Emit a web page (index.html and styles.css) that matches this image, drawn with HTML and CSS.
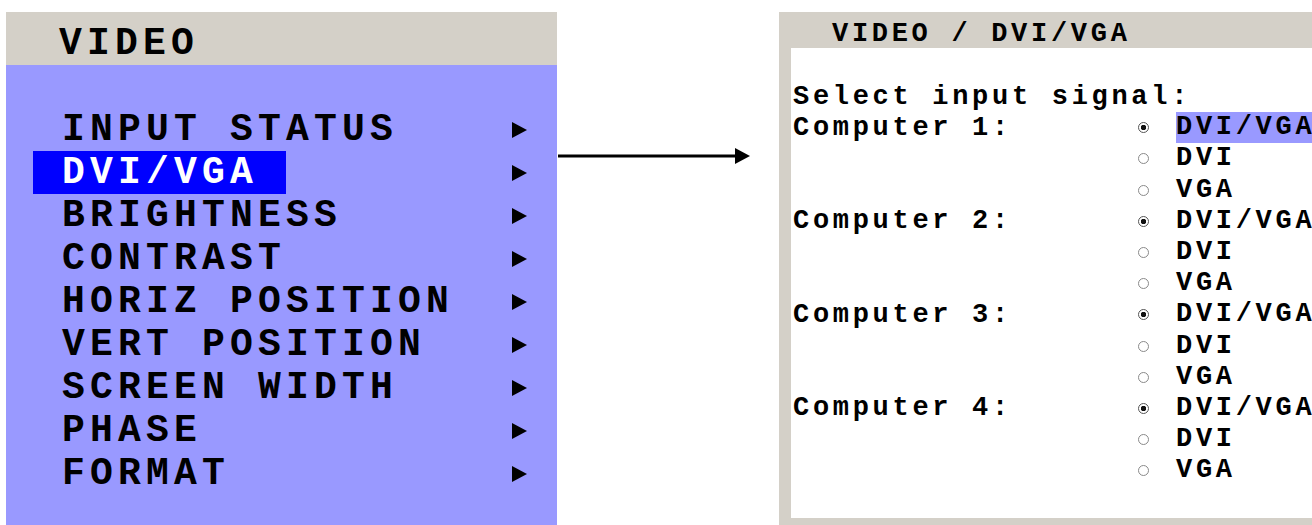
FILE: index.html
```html
<!DOCTYPE html>
<html lang="en">
<head>
  <meta charset="UTF-8">
  <meta name="viewport" content="width=device-width, initial-scale=1.0">
  <title>Video / DVI/VGA</title>
  <link rel="stylesheet" href="styles.css">
</head>
<body>

  <div class="stage">

    <!-- on-screen display menu -->
    <section class="osd">
      <header class="osd-title">VIDEO</header>
      <ul class="osd-menu">
        <li class="osd-item"><span class="osd-label">INPUT STATUS</span><span class="osd-arrow"></span></li>
        <li class="osd-item"><span class="osd-label is-active">DVI/VGA</span><span class="osd-arrow"></span></li>
        <li class="osd-item"><span class="osd-label">BRIGHTNESS</span><span class="osd-arrow"></span></li>
        <li class="osd-item"><span class="osd-label">CONTRAST</span><span class="osd-arrow"></span></li>
        <li class="osd-item"><span class="osd-label">HORIZ POSITION</span><span class="osd-arrow"></span></li>
        <li class="osd-item"><span class="osd-label">VERT POSITION</span><span class="osd-arrow"></span></li>
        <li class="osd-item"><span class="osd-label">SCREEN WIDTH</span><span class="osd-arrow"></span></li>
        <li class="osd-item"><span class="osd-label">PHASE</span><span class="osd-arrow"></span></li>
        <li class="osd-item"><span class="osd-label">FORMAT</span><span class="osd-arrow"></span></li>
      </ul>
    </section>

    <div class="pointer">
      <svg width="222" height="30" viewBox="0 0 222 30">
        <line x1="1" y1="15" x2="182" y2="15" stroke="#000" stroke-width="3"/>
        <polygon points="178,7 193,15 178,23" fill="#000"/>
      </svg>
    </div>

    <!-- web configuration page -->
    <section class="web">
      <header class="web-title">VIDEO / DVI/VGA</header>
      <div class="web-body">
        <div class="sig-row">Select input signal:</div>

        <div class="sig-row"><span class="sig-name">Computer 1:</span><span class="radio is-on"></span><span class="sig-opt is-current">DVI/VGA</span></div>
        <div class="sig-row"><span class="sig-name"></span><span class="radio"></span><span class="sig-opt">DVI</span></div>
        <div class="sig-row"><span class="sig-name"></span><span class="radio"></span><span class="sig-opt">VGA</span></div>

        <div class="sig-row"><span class="sig-name">Computer 2:</span><span class="radio is-on"></span><span class="sig-opt">DVI/VGA</span></div>
        <div class="sig-row"><span class="sig-name"></span><span class="radio"></span><span class="sig-opt">DVI</span></div>
        <div class="sig-row"><span class="sig-name"></span><span class="radio"></span><span class="sig-opt">VGA</span></div>

        <div class="sig-row"><span class="sig-name">Computer 3:</span><span class="radio is-on"></span><span class="sig-opt">DVI/VGA</span></div>
        <div class="sig-row"><span class="sig-name"></span><span class="radio"></span><span class="sig-opt">DVI</span></div>
        <div class="sig-row"><span class="sig-name"></span><span class="radio"></span><span class="sig-opt">VGA</span></div>

        <div class="sig-row"><span class="sig-name">Computer 4:</span><span class="radio is-on"></span><span class="sig-opt">DVI/VGA</span></div>
        <div class="sig-row"><span class="sig-name"></span><span class="radio"></span><span class="sig-opt">DVI</span></div>
        <div class="sig-row"><span class="sig-name"></span><span class="radio"></span><span class="sig-opt">VGA</span></div>
      </div>
    </section>

  </div>

</body>
</html>
```

FILE: styles.css
```css
body {
  margin: 0;
  background: #fff;
  overflow: hidden;
  font-family: "Liberation Mono", "Courier New", monospace;
  font-weight: bold;
  color: #000;
}

.stage {
  display: flex;
  align-items: flex-start;
  width: 1312px;
  height: 525px;
  padding: 12px 0 0 6px;
  box-sizing: border-box;
  overflow: hidden;
}

/* OSD menu */

.osd {
  flex: none;
  width: 551px;
  height: 513px;
  background: #9999ff;
  font-size: 38px;
  letter-spacing: 5.2px;
}

.osd-title {
  height: 53px;
  box-sizing: border-box;
  padding: 10px 0 0 53px;
  line-height: 43px;
  background: #d4d0c8;
}

.osd-menu {
  list-style: none;
  margin: 0;
  padding: 43px 30px 0 56px;
}

.osd-item {
  display: flex;
  justify-content: space-between;
  align-items: center;
  height: 43px;
}

.osd-label {
  line-height: 43px;
}

.osd-label.is-active {
  margin-left: -29px;
  padding: 0 28px 0 29px;
  background: #0000ff;
  color: #fff;
}

.osd-arrow {
  width: 0;
  height: 0;
  border-top: 8px solid transparent;
  border-bottom: 8px solid transparent;
  border-left: 15px solid #000;
}

/* arrow between the two views */

.pointer {
  flex: none;
  width: 222px;
  margin-top: 129px;
}

.pointer svg {
  display: block;
}

/* web page */

.web {
  flex: none;
  width: 560px;
  height: 513px;
  background: #d4d0c8;
  display: flex;
  flex-direction: column;
  font-size: 27px;
  letter-spacing: 3.7px;
}

.web-title {
  height: 36px;
  line-height: 44px;
  padding-left: 53px;
}

.web-body {
  flex: 1;
  margin: 0 0 7px 12px;
  padding: 33px 0 0 2px;
  background: #fff;
}

.sig-row {
  display: flex;
  align-items: center;
  height: 31.2px;
}

.sig-name {
  width: 345px;
  flex: none;
}

.radio {
  flex: none;
  width: 11px;
  height: 11px;
  border: 1px solid #8a8a8a;
  border-radius: 50%;
  box-sizing: border-box;
  background: #fff;
}

.radio.is-on {
  border-color: #555;
  background: radial-gradient(circle, #111 0 2.5px, #fff 3px);
}

.sig-opt {
  margin-left: 27px;
  line-height: 31.2px;
}

.sig-opt.is-current {
  flex: 1;
  background: #9999ff;
}
```
